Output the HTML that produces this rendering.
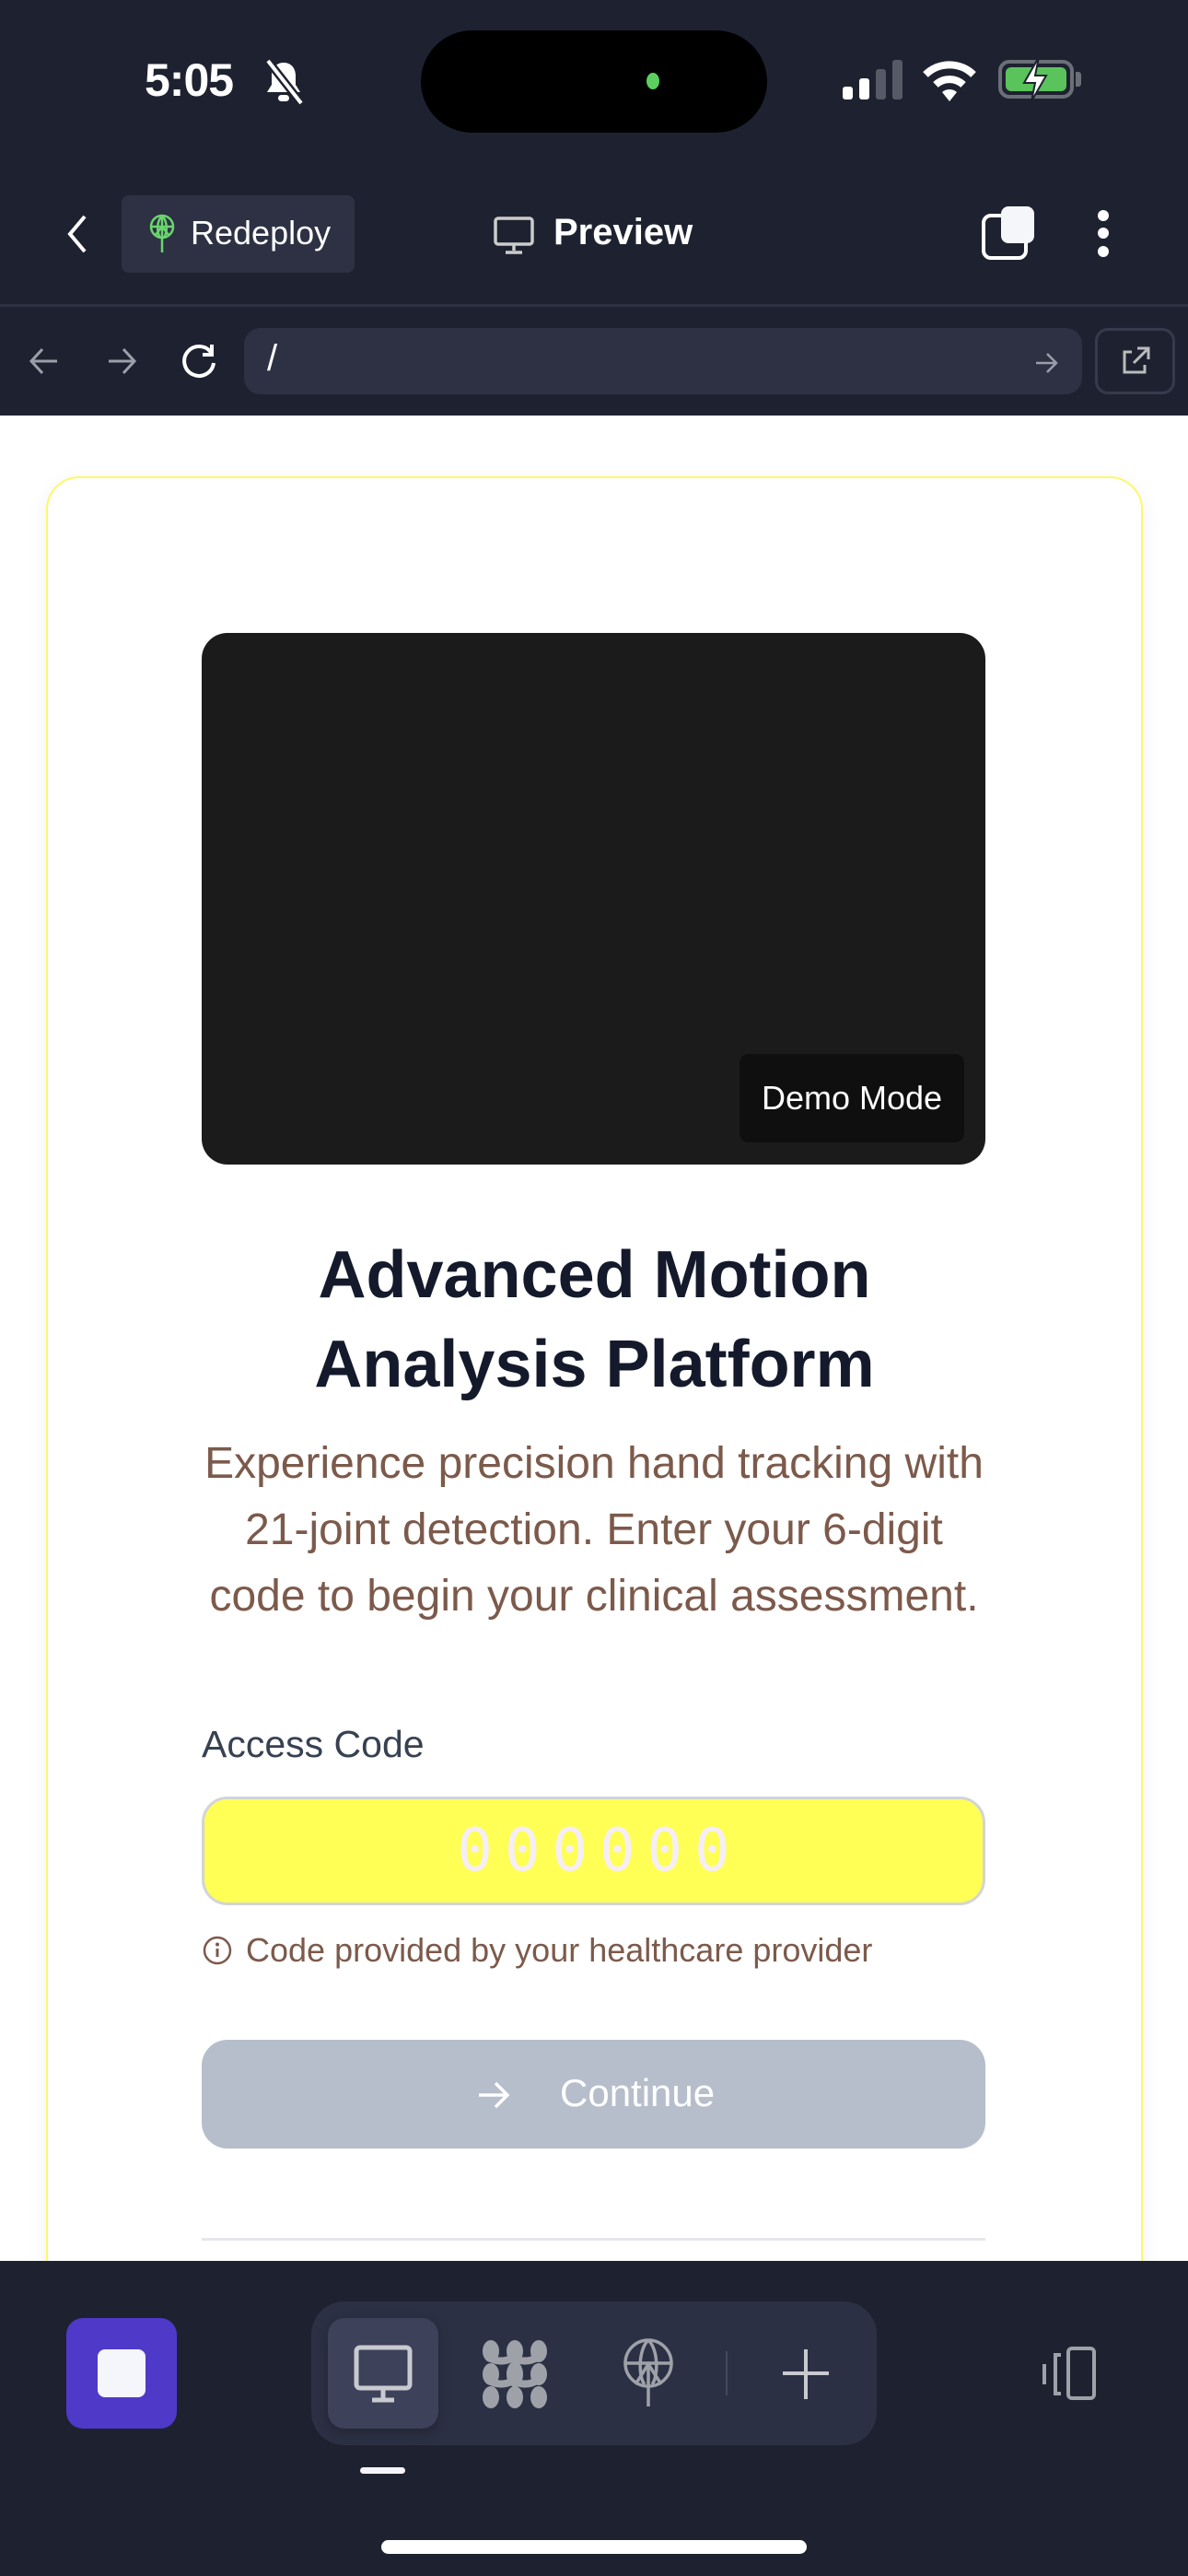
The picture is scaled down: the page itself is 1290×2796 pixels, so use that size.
<!DOCTYPE html>
<html><head><meta charset="utf-8"><style>
*{margin:0;padding:0;box-sizing:border-box}
body{width:1290px;height:2796px;position:relative;background:#fff;font-family:"Liberation Sans",sans-serif;overflow:hidden}
.a{position:absolute}
</style></head><body>
<!-- header -->
<div class="a" style="left:0;top:0;width:1290px;height:451px;background:#1e2230"></div>
<div class="a" style="left:157px;top:58px;color:#fff;font-size:50px;font-weight:bold;letter-spacing:-1px">5:05</div>
<svg class="a" style="left:283px;top:62px" width="50" height="52" viewBox="0 0 50 52"><path d="M25 6c-8 0-13 6-13 14v10l-5 8h36l-5-8V20c0-8-5-14-13-14z" fill="#fff"/><rect x="19" y="41" width="12" height="7" rx="3.5" fill="#fff"/><path d="M8 4L44 50" stroke="#1e2230" stroke-width="9"/><path d="M8 4L44 50" stroke="#fff" stroke-width="4"/></svg>
<div class="a" style="left:457px;top:33px;width:376px;height:111px;background:#000;border-radius:56px"></div>
<div class="a" style="left:702px;top:79px;width:14px;height:18px;background:#5bd05f;border-radius:50%"></div>
<div class="a" style="left:915px;top:94px;width:11px;height:14px;background:#fff;border-radius:3px"></div>
<div class="a" style="left:933px;top:85px;width:11px;height:23px;background:#fff;border-radius:3px"></div>
<div class="a" style="left:951px;top:75px;width:11px;height:33px;background:#555a66;border-radius:3px"></div>
<div class="a" style="left:969px;top:65px;width:11px;height:43px;background:#555a66;border-radius:3px"></div>
<svg class="a" style="left:1001px;top:64px" width="60" height="46" viewBox="0 0 60 46"><path d="M4 17a37 37 0 0 1 52 0" stroke="#fff" stroke-width="8" fill="none"/><path d="M15 28a22 22 0 0 1 30 0" stroke="#fff" stroke-width="8" fill="none"/><path d="M22 36l8 10 8-10a12 12 0 0 0-16 0z" fill="#fff"/></svg>
<div class="a" style="left:1084px;top:65px;width:82px;height:42px;border:4px solid #6a6f78;border-radius:12px;padding:4px"><div style="width:100%;height:100%;background:#5ac35c;border-radius:6px"></div></div>
<div class="a" style="left:1168px;top:78px;width:6px;height:16px;background:#6a6f78;border-radius:0 3px 3px 0"></div>
<svg class="a" style="left:1106px;top:60px" width="36" height="52" viewBox="0 0 36 52"><path d="M22 2L6 30h12l-4 20 16-28H18z" fill="#fff" stroke="#1e2230" stroke-width="2"/></svg>

<svg class="a" style="left:70px;top:232px" width="28" height="44" viewBox="0 0 28 44"><path d="M22 3L6 22l16 19" stroke="#fff" stroke-width="4" fill="none"/></svg>
<div class="a" style="left:132px;top:212px;width:253px;height:84px;background:#2d3143;border-radius:8px"></div>
<svg class="a" style="left:160px;top:232px" width="32" height="42" viewBox="0 0 32 42"><g stroke="#6bd46e" stroke-width="2.5" fill="none"><circle cx="16" cy="14" r="12"/><path d="M4 14h24M16 2v40M16 2c-6 6-6 18-2 24M16 2c6 6 6 18 2 24M8 24l8-10 8 10"/></g></svg>
<div class="a" style="left:207px;top:232px;color:#fff;font-size:36px">Redeploy</div>
<svg class="a" style="left:535px;top:234px" width="46" height="44" viewBox="0 0 46 44"><rect x="3" y="3" width="40" height="28" rx="3" stroke="#ccc" stroke-width="3.5" fill="none"/><path d="M23 31v7M14 40h18" stroke="#ccc" stroke-width="3.5"/></svg>
<div class="a" style="left:601px;top:230px;color:#fff;font-size:40px;font-weight:bold">Preview</div>
<div class="a" style="left:1066px;top:232px;width:50px;height:50px;border:4px solid #fff;border-radius:10px"></div>
<div class="a" style="left:1087px;top:224px;width:36px;height:40px;background:#f4f6fa;border-radius:8px"></div>
<div class="a" style="left:1192px;top:228px;width:12px;height:12px;background:#fff;border-radius:50%"></div>
<div class="a" style="left:1192px;top:247px;width:12px;height:12px;background:#fff;border-radius:50%"></div>
<div class="a" style="left:1192px;top:267px;width:12px;height:12px;background:#fff;border-radius:50%"></div>
<div class="a" style="left:0;top:330px;width:1290px;height:3px;background:#2c3041"></div>
<svg class="a" style="left:30px;top:374px" width="36" height="36" viewBox="0 0 36 36"><path d="M32 18H4M16 5L4 18l12 13" stroke="#9aa0aa" stroke-width="3" fill="none"/></svg>
<svg class="a" style="left:114px;top:374px" width="36" height="36" viewBox="0 0 36 36"><path d="M4 18h28M20 5l12 13-12 13" stroke="#9aa0aa" stroke-width="3" fill="none"/></svg>
<svg class="a" style="left:194px;top:370px" width="44" height="44" viewBox="0 0 44 44"><path d="M36 14A16 16 0 1 0 38 24" stroke="#fff" stroke-width="4" fill="none"/><path d="M36 4v11H26" stroke="#fff" stroke-width="4" fill="none"/></svg>
<div class="a" style="left:265px;top:356px;width:910px;height:72px;background:#2d3143;border-radius:18px"></div>
<div class="a" style="left:290px;top:367px;color:#fff;font-size:40px">/</div>
<svg class="a" style="left:1122px;top:380px" width="28" height="28" viewBox="0 0 28 28"><path d="M3 14h22M15 4l10 10-10 10" stroke="#9aa0aa" stroke-width="2.5" fill="none"/></svg>
<div class="a" style="left:1189px;top:356px;width:87px;height:72px;border:3px solid #363a4c;border-radius:14px"></div>
<svg class="a" style="left:1215px;top:374px" width="36" height="36" viewBox="0 0 36 36"><path d="M14 8H6v22h22v-8M20 4h12v12M32 4L16 20" stroke="#bbb" stroke-width="3" fill="none"/></svg>

<!-- card -->
<div class="a" style="left:50px;top:517px;width:1191px;height:2000px;border:2px solid #fbf96a;border-radius:36px;box-shadow:0 6px 24px rgba(0,0,0,0.06)"></div>
<div class="a" style="left:219px;top:687px;width:851px;height:577px;background:#1b1b1b;border-radius:28px"></div>
<div class="a" style="left:803px;top:1144px;width:244px;height:96px;background:#0f0f0f;border-radius:10px;color:#fff;font-size:36px;line-height:96px;text-align:center">Demo Mode</div>
<div class="a" style="left:20px;top:1336px;width:1251px;text-align:center;color:#141a2b;font-size:72px;font-weight:bold;line-height:97px">Advanced Motion<br>Analysis Platform</div>
<div class="a" style="left:100px;top:1553px;width:1090px;text-align:center;color:#7c5a4b;font-size:48px;line-height:72px">Experience precision hand tracking with<br>21-joint detection. Enter your 6-digit<br>code to begin your clinical assessment.</div>
<div class="a" style="left:219px;top:1870px;color:#374151;font-size:41px">Access Code</div>
<div class="a" style="left:219px;top:1950px;width:851px;height:118px;background:#ffff55;border:3px solid #d2d4d8;border-radius:28px;text-align:center;font-family:'DejaVu Sans Mono','Liberation Mono',monospace;font-size:64px;line-height:112px;color:#f6eef6;letter-spacing:13px;padding-left:13px">000000</div>
<svg class="a" style="left:219px;top:2100px" width="34" height="34" viewBox="0 0 34 34"><circle cx="17" cy="17" r="14" stroke="#7c5a4b" stroke-width="2.5" fill="none"/><path d="M17 15v9" stroke="#7c5a4b" stroke-width="3"/><circle cx="17" cy="10.5" r="2" fill="#7c5a4b"/></svg>
<div class="a" style="left:267px;top:2096px;color:#7c5a4b;font-size:36px">Code provided by your healthcare provider</div>
<div class="a" style="left:219px;top:2214px;width:851px;height:118px;background:#b6bdcb;border-radius:28px"></div>
<svg class="a" style="left:516px;top:2254px" width="40" height="40" viewBox="0 0 40 40"><path d="M4 20h30M22 7l13 13-13 13" stroke="#fff" stroke-width="3.5" fill="none"/></svg>
<div class="a" style="left:608px;top:2248px;color:#fff;font-size:42px">Continue</div>
<div class="a" style="left:219px;top:2429px;width:851px;height:3px;background:#e5e7eb"></div>

<!-- bottom bar -->
<div class="a" style="left:0;top:2454px;width:1290px;height:342px;background:#1e2230"></div>
<div class="a" style="left:72px;top:2516px;width:120px;height:120px;background:#4f39c8;border-radius:18px"></div>
<div class="a" style="left:106px;top:2550px;width:52px;height:52px;background:#f4f6fb;border-radius:8px"></div>
<div class="a" style="left:338px;top:2498px;width:614px;height:156px;background:#2c3044;border-radius:36px"></div>
<div class="a" style="left:356px;top:2516px;width:120px;height:120px;background:#3d4159;border-radius:18px;box-shadow:0 4px 12px rgba(0,0,0,0.25)"></div>
<svg class="a" style="left:384px;top:2545px" width="64" height="64" viewBox="0 0 64 64"><rect x="3" y="3" width="58" height="44" rx="4" stroke="#c8cad0" stroke-width="5" fill="none"/><path d="M32 47v12M20 60h24" stroke="#c8cad0" stroke-width="5"/></svg>
<svg class="a" style="left:522px;top:2540px" width="74" height="74" viewBox="0 0 74 74" fill="#9ea2a8"><ellipse cx="11" cy="12" rx="9" ry="12"/><ellipse cx="37" cy="12" rx="9" ry="12"/><ellipse cx="63" cy="12" rx="9" ry="12"/><ellipse cx="11" cy="37" rx="9" ry="12"/><ellipse cx="37" cy="37" rx="9" ry="14"/><ellipse cx="63" cy="37" rx="9" ry="12"/><ellipse cx="11" cy="62" rx="9" ry="12"/><ellipse cx="37" cy="62" rx="9" ry="12"/><ellipse cx="63" cy="62" rx="9" ry="12"/><path d="M11 20q13 6 26 -2M37 20q13 6 26 -2M11 45q13 6 26 -2M37 45q13 6 26 -2" stroke="#9ea2a8" stroke-width="8" fill="none"/></svg>
<svg class="a" style="left:674px;top:2538px" width="60" height="76" viewBox="0 0 60 76"><g stroke="#9ea2a8" stroke-width="3.5" fill="none"><ellipse cx="30" cy="27" rx="25" ry="25"/><path d="M5 27h50M30 2c-11 10-11 40-4 48M30 2c11 10 11 40 4 48M30 74V28M16 50l14-22 14 22"/></g></svg>
<div class="a" style="left:788px;top:2552px;width:2px;height:48px;background:#444a5e"></div>
<svg class="a" style="left:848px;top:2548px" width="54" height="56" viewBox="0 0 54 56"><path d="M27 2v54M2 28h50" stroke="#c8cad0" stroke-width="4"/></svg>
<svg class="a" style="left:1122px;top:2546px" width="72" height="60" viewBox="0 0 72 60"><g stroke="#9ea2a8" stroke-width="4" fill="none"><rect x="38" y="3" width="28" height="54" rx="4"/><path d="M30 10h-6v42h6M12 20v22"/></g></svg>
<div class="a" style="left:391px;top:2678px;width:49px;height:7px;background:#f4f6fb;border-radius:4px"></div>
<div class="a" style="left:414px;top:2757px;width:462px;height:15px;background:#fff;border-radius:8px"></div>
</body></html>
